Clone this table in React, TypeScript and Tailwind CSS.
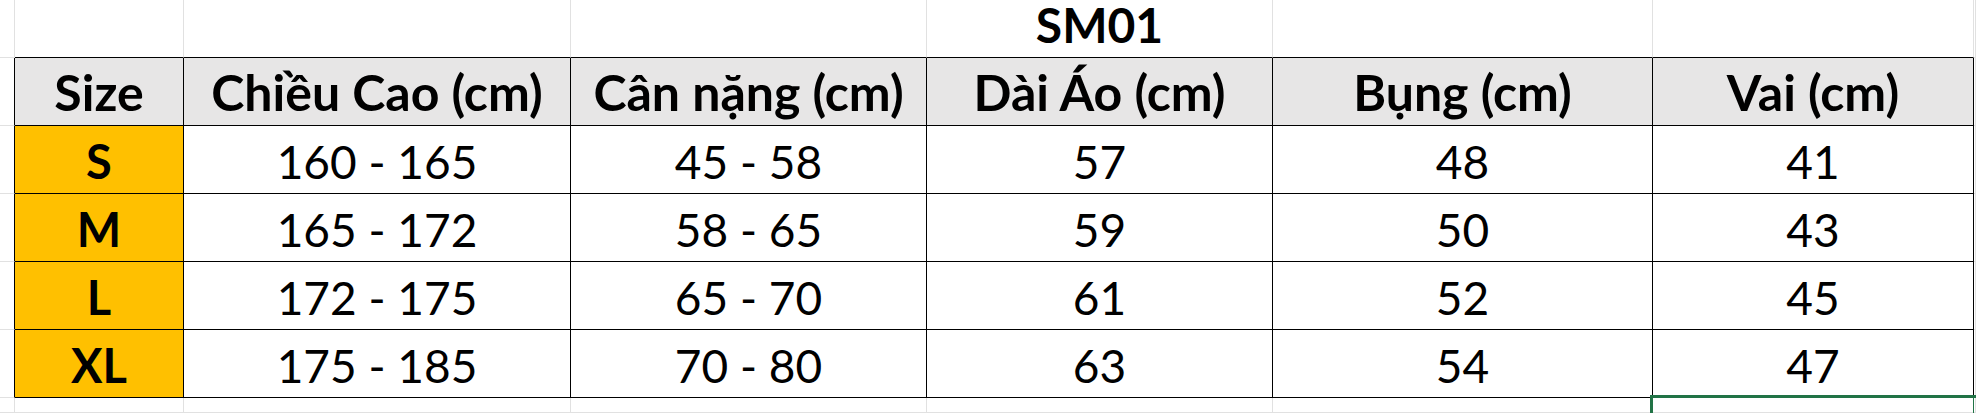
import React from "react";

const COLS = ["Size", "Chiều Cao (cm)", "Cân nặng (cm)", "Dài Áo (cm)", "Bụng (cm)", "Vai (cm)"];
const DATA = [
  ["S", "160 - 165", "45 - 58", "57", "48", "41"],
  ["M", "165 - 172", "58 - 65", "59", "50", "43"],
  ["L", "172 - 175", "65 - 70", "61", "52", "45"],
  ["XL", "175 - 185", "70 - 80", "63", "54", "47"],
];

export default function App() {
  const cells: React.ReactNode[] = [];
  for (let r = 0; r < 7; r++) {
    for (let c = 0; c < 8; c++) {
      const rightBlack = r >= 1 && r <= 5 && c <= 6;
      const bottomBlack = c >= 1 && c <= 6 && r <= 5;
      let text = "";
      let bg = "bg-white";
      let textCls = "font-normal text-[46px] leading-[55px] pb-[4px]";
      if (r === 0 && c === 4) {
        text = "SM01";
        textCls = "font-bold text-[48px] leading-[48px] pb-[8px]";
      } else if (r === 1 && c >= 1 && c <= 6) {
        text = COLS[c - 1];
        textCls = "font-bold text-[50px] leading-[50px] pb-[8px]";
        bg = "bg-[#e7e6e6]";
      } else if (r >= 2 && r <= 5 && c >= 1 && c <= 6) {
        text = DATA[r - 2][c - 1];
        if (c === 1) {
          textCls = "font-bold text-[47px] leading-[55px] pb-[4px]";
          bg = "bg-[#ffc000]";
        }
      }
      const selected = r === 6 && c === 6;
      cells.push(
        <div
          key={`${r}-${c}`}
          className={[
            "relative flex items-end justify-center overflow-visible whitespace-nowrap",
            bg,
            "border-r border-b",
            rightBlack ? "border-r-black" : "border-r-[#e1e1e1]",
            bottomBlack ? "border-b-black" : "border-b-[#e1e1e1]",
            textCls,
          ].join(" ")}
        >
          {text && <span>{text}</span>}
          {selected && (
            <div className="absolute left-[-3px] top-[-3px] w-[326px] h-[40px] border-[3px] border-[#217346]" />
          )}
        </div>
      );
    }
  }
  return (
    <div
      className="w-[1976px] h-[413px] overflow-hidden bg-white text-black"
      style={{ fontFamily: "Lato, 'Open Sans', sans-serif" }}
    >
      <div className="grid grid-cols-[15px_169px_387px_356px_346px_380px_321px_1fr] grid-rows-[58px_68px_68px_68px_68px_68px_1fr] h-full">
        {cells}
      </div>
    </div>
  );
}
